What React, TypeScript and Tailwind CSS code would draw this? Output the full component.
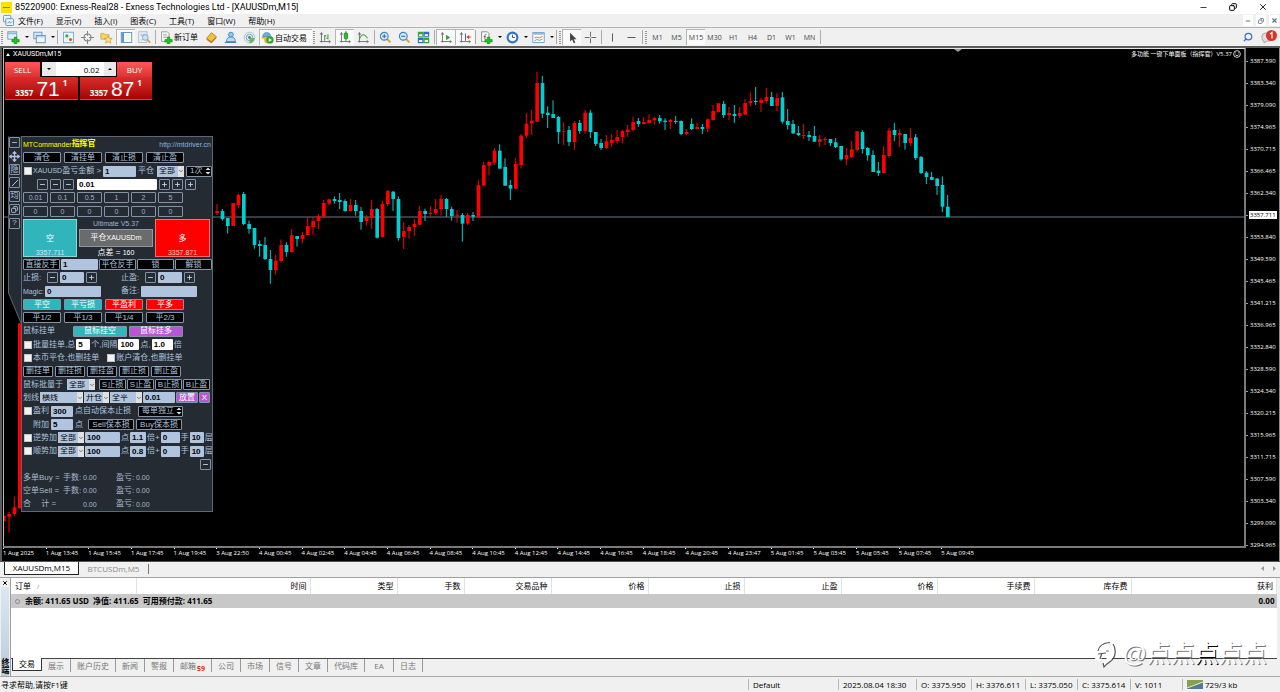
import type { ReactNode } from "react";
import { ChevronDown, Copy, Minus, Move, Plus, Search, X } from "lucide-react";

type Bar = ["r" | "c", number, number, number, number];

// colour, body top, body bottom, wick top, wick bottom
const segments: { from: number; base: number; bars: Bar[] }[] = [
  {
    from: -40,
    base: 990,
    bars: [
      ["r", 378, 393, 375, 435],
      ["r", 372, 380, 365, 428],
      ["r", 352, 372, 320, 380],
      ["r", -200, 355, -200, 355],
    ],
  },
  {
    from: 0,
    base: 330,
    bars: [
      ["r", 123, 129, 102, 135], ["c", 123, 147, 117, 152], ["c", 144, 168, 144, 191], ["r", 99, 168, 99, 168],
      ["r", 75, 105, 71, 116], ["c", 72, 162, 66, 166], ["c", 162, 177, 152, 191], ["c", 174, 225, 174, 236],
      ["c", 222, 228, 211, 260], ["c", 225, 267, 201, 270], ["c", 267, 300, 240, 341], ["r", 272, 300, 254, 314],
      ["r", 225, 273, 208, 278], ["c", 225, 246, 217, 260], ["r", 196, 246, 178, 248], ["c", 198, 207, 198, 230],
      ["r", 195, 207, 186, 221], ["r", 168, 195, 141, 195], ["r", 153, 171, 141, 194], ["r", 138, 153, 132, 177],
      ["r", 99, 140, 90, 140], ["r", 88, 101, 86, 105], ["c", 87, 93, 79, 101], ["c", 90, 96, 69, 117],
      ["c", 93, 123, 88, 125], ["r", 105, 123, 87, 124], ["c", 105, 123, 90, 137], ["c", 123, 156, 111, 179],
      ["r", 141, 153, 135, 167], ["r", 117, 144, 90, 176], ["c", 117, 203, 114, 206], ["r", 102, 201, 92, 203],
      ["r", 63, 102, 60, 107], ["c", 65, 87, 63, 123], ["c", 87, 204, 79, 212], ["r", 183, 201, 156, 237],
      ["r", 171, 183, 165, 206], ["r", 162, 171, 147, 198], ["r", 123, 164, 108, 166], ["c", 123, 132, 116, 153],
      ["r", 129, 132, 108, 140], ["r", 117, 129, 87, 135], ["r", 87, 117, 75, 137], ["c", 87, 117, 84, 141],
      ["c", 117, 138, 110, 152], ["r", 134, 137, 120, 158], ["c", 135, 161, 129, 215], ["r", 135, 161, 129, 165],
      ["c", 135, 140, 126, 153], ["r", 45, 141, 31, 141],
    ],
  },
  {
    from: 50,
    base: 0,
    bars: [
      ["r", 315, 377, 306, 377], ["r", 306, 317, 302, 346], ["r", 272, 308, 264, 315], ["c", 272, 326, 253, 326],
      ["c", 321, 377, 295, 378], ["c", 375, 386, 360, 420], ["r", 312, 386, 294, 388], ["r", 227, 315, 222, 326],
      ["r", 191, 227, 159, 234], ["r", 182, 190, 150, 225], ["r", 69, 185, 36, 186], ["c", 69, 161, 48, 174],
      ["c", 158, 165, 139, 204], ["c", 162, 174, 121, 174], ["c", 171, 216, 168, 251], ["r", 213, 215, 187, 255],
      ["c", 210, 246, 198, 258], ["r", 189, 246, 183, 270], ["c", 189, 213, 180, 221], ["r", 158, 213, 150, 221],
      ["c", 158, 216, 150, 234], ["c", 216, 252, 216, 258], ["c", 249, 264, 237, 270], ["r", 244, 264, 225, 267],
      ["r", 240, 249, 223, 261], ["r", 231, 243, 210, 251], ["r", 213, 231, 210, 250], ["r", 209, 216, 195, 230],
      ["r", 186, 210, 170, 215], ["c", 183, 192, 174, 201], ["r", 186, 192, 171, 194], ["r", 180, 189, 163, 191],
      ["r", 174, 181, 170, 194], ["c", 174, 184, 165, 191], ["c", 182, 186, 175, 210], ["r", 180, 186, 177, 207],
      ["c", 183, 186, 168, 192], ["c", 183, 222, 181, 226], ["r", 216, 222, 207, 226], ["c", 192, 207, 175, 210],
      ["r", 201, 207, 188, 208], ["c", 201, 207, 192, 222], ["r", 178, 206, 176, 216], ["r", 153, 180, 135, 182],
      ["r", 130, 156, 129, 158], ["c", 132, 165, 123, 174],
    ],
  },
  {
    from: 96,
    base: 30,
    bars: [
      ["r", 129, 135, 111, 150], ["c", 132, 138, 105, 159], ["r", 129, 138, 111, 144], ["r", 99, 134, 87, 135],
      ["r", 93, 99, 67, 108], ["c", 93, 96, 51, 105], ["r", 90, 99, 84, 126], ["r", 81, 93, 54, 101],
      ["c", 81, 108, 66, 108], ["r", 84, 108, 70, 123], ["c", 82, 155, 66, 161], ["c", 153, 165, 117, 179],
      ["c", 162, 190, 150, 192], ["c", 189, 195, 168, 198], ["r", 195, 198, 162, 207], ["c", 195, 201, 183, 213],
      ["c", 198, 215, 168, 216], ["r", 207, 216, 195, 231], ["r", 207, 210, 201, 225], ["c", 207, 219, 207, 228],
      ["c", 217, 231, 204, 234], ["c", 228, 268, 228, 272], ["r", 255, 267, 234, 285], ["r", 238, 261, 213, 264],
      ["r", 184, 240, 183, 245], ["c", 186, 237, 180, 251], ["c", 234, 256, 231, 272], ["c", 255, 306, 241, 306],
      ["c", 302, 309, 276, 318], ["r", 255, 309, 228, 311], ["r", 182, 258, 174, 264], ["c", 180, 195, 159, 213],
      ["r", 189, 195, 178, 231], ["c", 192, 219, 192, 239], ["r", 204, 219, 174, 228], ["c", 202, 264, 192, 270],
      ["c", 261, 309, 258, 312], ["c", 308, 321, 303, 342], ["c", 321, 330, 306, 330], ["c", 326, 348, 324, 375],
      ["c", 345, 410, 319, 426], ["c", 410, 441, 375, 441],
    ],
  },
];

const candles = segments.flatMap((s) =>
  s.bars.map(([c, top, bottom, high, low], i) => ({
    x: 16 * (s.from + i) - 759,
    fill: c === "r" ? "#ff0000" : "#00ced1",
    top: top + s.base,
    bottom: bottom + s.base,
    high: high + s.base,
    low: low + s.base,
  }))
);

const prices = [
  "3387.590", "3383.340", "3379.090", "3374.965", "3370.715", "3366.465", "3362.340", "3357.711",
  "3353.840", "3349.590", "3345.465", "3341.215", "3336.965", "3332.840", "3328.590", "3324.340",
  "3320.215", "3315.965", "3311.715", "3307.590", "3303.340", "3299.090", "3294.965",
];

const times = [
  "1 Aug 2025", "1 Aug 13:45", "1 Aug 15:45", "1 Aug 17:45", "1 Aug 19:45", "3 Aug 22:50",
  "4 Aug 00:45", "4 Aug 02:45", "4 Aug 04:45", "4 Aug 06:45", "4 Aug 08:45", "4 Aug 10:45",
  "4 Aug 12:45", "4 Aug 14:45", "4 Aug 16:45", "4 Aug 18:45", "4 Aug 20:45", "4 Aug 23:47",
  "5 Aug 01:45", "5 Aug 03:45", "5 Aug 05:45", "5 Aug 07:45", "5 Aug 09:45",
];

const menus = ["文件(F)", "显示(V)", "插入(I)", "图表(C)", "工具(T)", "窗口(W)", "帮助(H)"];
const timeframes = ["M1", "M5", "M15", "M30", "H1", "H4", "D1", "W1", "MN"];

const columns = [
  { name: "时间", width: "w-[174px]" },
  { name: "类型", width: "w-[87px]" },
  { name: "手数", width: "w-[67px]" },
  { name: "交易品种", width: "w-[87px]" },
  { name: "价格", width: "w-[97px]" },
  { name: "止损", width: "w-[96px]" },
  { name: "止盈", width: "w-[97px]" },
  { name: "价格", width: "w-[96px]" },
  { name: "手续费", width: "w-[97px]" },
  { name: "库存费", width: "w-[97px]" },
  { name: "获利", width: "" },
];

const terminalTabs = ["展示", "账户历史", "新闻", "警报", "邮箱", "公司", "市场", "信号", "文章", "代码库", "EA", "日志"];

/* ---------- toolbar ---------- */

function Icon({ children }: { children: ReactNode }) {
  return (
    <svg viewBox="0 0 16 16" className="size-[13px] shrink-0" fill="none" aria-hidden="true">
      {children}
    </svg>
  );
}

const plusMark = <path d="M9 7.500h3v3h3v3h-3v2.500H9V13.500H6v-3h3z" fill="#1fc21f" stroke="#0b8a0b" strokeWidth=".7" />;
const axes = <path d="M3 2v12M1 13h13M1.500 4.500 3 2l1.500 2.500M12 11.500l2 1.500-2 1.500" stroke="#666" strokeWidth="1.100" />;

function Tool({ label, active, children }: { label: string; active?: boolean; children: ReactNode }) {
  return (
    <button
      aria-label={label}
      className={`flex h-[16px] w-[19px] shrink-0 items-center justify-center ${
        active ? "border-l border-t border-[#b5b5b5] bg-[#f9f9f9]" : ""
      }`}
    >
      {children}
    </button>
  );
}

function Caret() {
  return (
    <button aria-label="更多" className="flex w-[7px] shrink-0 items-center justify-center">
      <svg viewBox="0 0 4 2" className="h-[2px] w-[4px]"><path d="M0 0h4L2 2z" fill="#000" /></svg>
    </button>
  );
}

const Sep = () => <span className="mx-px h-[14px] w-px shrink-0 bg-[#aaa]" />;
const Grip = () => <span className="mx-px h-[13px] w-[2px] shrink-0 border-x border-dotted border-[#999]" />;

function Magnifier({ sign }: { sign: string }) {
  return (
    <Icon>
      <path d="M9.500 9.500 14 14" stroke="#d6a431" strokeWidth="2.500" />
      <circle cx="6.500" cy="6.500" r="4.800" fill="#d4ebfa" stroke="#4187c4" strokeWidth="1.400" />
      <path d={sign} stroke="#2a70b0" strokeWidth="1.400" />
    </Icon>
  );
}

function Toolbar() {
  return (
    <div className="flex h-[19px] items-center border-t border-[#b4b4b4] bg-[#f0f0f0] text-[8px]">
      <Grip />
      <Tool label="新图表">
        <Icon><rect x="1" y="1" width="11" height="9" fill="#e6f2fb" stroke="#5b92c4" /><path d="M1 3h11" stroke="#8bb6da" strokeWidth="2" />{plusMark}</Icon>
      </Tool>
      <Caret />
      <Tool label="配置文件">
        <Icon><rect x="1" y="1.500" width="10" height="8" fill="#d7e8f6" stroke="#5b92c4" /><rect x="4" y="5.500" width="11" height="9" fill="#f1f8fd" stroke="#4781b8" /><path d="M4.500 7h10" stroke="#b3d0e8" strokeWidth="2" /></Icon>
      </Tool>
      <Caret />
      <Sep />
      <Tool label="市场报价">
        <Icon><rect x="2" y="1.500" width="12" height="13" fill="#f5fbff" stroke="#5d9cc9" /><circle cx="6" cy="6" r="2" fill="#2fae38" /><circle cx="10.500" cy="10.500" r="2" fill="#e05b2b" /><path d="M4 13l8-10" stroke="#bcd8ea" strokeWidth=".8" /></Icon>
      </Tool>
      <Tool label="数据窗口">
        <Icon><circle cx="8" cy="8" r="4.300" stroke="#808080" strokeWidth="1.300" /><path d="M8 0v6M8 10v6M0 8h6M10 8h6" stroke="#808080" strokeWidth="1.200" /></Icon>
      </Tool>
      <Tool label="导航">
        <Icon><path d="M1 3h4l1 1.500h5V10H1z" fill="#f5d469" stroke="#c99a2a" strokeWidth=".8" /><path d="m10 6 1.500 3 3.500.300-2.600 2.200.900 3.500L10 13.200 6.900 15l.8-3.500L5 9.300 8.500 9z" fill="#ffe27a" stroke="#c98e1c" strokeWidth=".8" /></Icon>
      </Tool>
      <Tool label="终端" active>
        <Icon><rect x="1.500" y="2" width="13" height="12" fill="#fff" stroke="#3f7fba" /><path d="M2 2.500h3v11H2z" fill="#5a96cc" /><path d="M7 5h6M7 7.500h6M7 10h6" stroke="#cfe0ee" strokeWidth=".8" /></Icon>
      </Tool>
      <Tool label="策略测试">
        <Icon><rect x="1" y="1" width="10" height="13" fill="#f1f6fa" stroke="#9ab0c2" /><path d="M3 4h6M3 6h3M3 11h3" stroke="#9ab0c2" /><circle cx="9" cy="8" r="3.500" fill="#cbe3f5" stroke="#6c9bc0" /><path d="m11.500 10.500 3.500 4" stroke="#cfa030" strokeWidth="2" /></Icon>
      </Tool>
      <Sep />
      <button className="flex h-[16px] w-[45px] shrink-0 items-center gap-px pl-[3px] whitespace-nowrap">
        <Icon><path d="M2 1h7l2 2v10H2z" fill="#fff" stroke="#888" /><path d="M4 4h4M4 6h5M4 8h4" stroke="#888" strokeWidth=".8" />{plusMark}</Icon>
        <span>新订单</span>
      </button>
      <Tool label="MetaEditor">
        <Icon><path d="M2 9 8 2l6 5-6 7z" fill="#f3bf3d" stroke="#ad7c17" /><path d="m2 9 6 3.500L14 7v2l-6 6-6-4z" fill="#b98218" /></Icon>
      </Tool>
      <Tool label="MQL5社区">
        <Icon><circle cx="8.500" cy="4.500" r="3" fill="#8dc5ef" stroke="#3b82bd" /><path d="M3 13c0-4 2-5.500 5.500-5.500S14 9 14 13z" fill="#b8dcf6" stroke="#3b82bd" /><path d="M1 14h14" stroke="#3b82bd" strokeWidth="1.500" /></Icon>
      </Tool>
      <Tool label="信号">
        <Icon><circle cx="8" cy="8" r="6.500" stroke="#9ab8cc" /><circle cx="8" cy="8" r="4" stroke="#6f9fbc" strokeWidth="1.200" /><circle cx="8" cy="8" r="1.700" fill="#3778a8" /><path d="M8 8v7.500c4-.5 6-3 6.500-6.500z" fill="#64b964" /></Icon>
      </Tool>
      <button className="flex h-[16px] w-[53px] shrink-0 items-center gap-px border-l border-t border-[#b5b5b5] bg-[#f9f9f9] pl-px whitespace-nowrap">
        <Icon><ellipse cx="7" cy="8" rx="6.500" ry="2" fill="#e9bd3a" /><path d="M2 7c0-7 10-7 10 0z" fill="#69aedd" stroke="#3b7eb1" strokeWidth=".7" /><path d="M3 9h8l-2 6H5z" fill="#e9bd3a" /><circle cx="11" cy="11" r="4.500" fill="#27a52c" /><path d="m9.500 8.500 4 2.500-4 2.500z" fill="#fff" /></Icon>
        <span>自动交易</span>
      </button>
      <Grip />
      <Tool label="柱状图"><Icon>{axes}<path d="M7 5v7M7 6h2M11 4v6M9 9h2" stroke="#42a047" strokeWidth="1.300" /></Icon></Tool>
      <Tool label="阴阳烛" active><Icon>{axes}<path d="M8.500 0v13" stroke="#168a1b" /><rect x="6.500" y="2.500" width="4" height="7" rx="1" fill="#25c22c" stroke="#168a1b" /></Icon></Tool>
      <Tool label="折线图"><Icon>{axes}<path d="M3 10c3-7 6-7 10-1" stroke="#42a047" strokeWidth="1.300" /></Icon></Tool>
      <Sep />
      <Tool label="放大"><Magnifier sign="M4 6.500h5M6.500 4v5" /></Tool>
      <Tool label="缩小"><Magnifier sign="M4 6.500h5" /></Tool>
      <Tool label="平铺窗口">
        <Icon><path d="M1 1h7v6H1zM8 8h7v7H8z" fill="#35a83a" /><path d="M8 1h7v6H8zM1 8h7v7H1z" fill="#2e6fc2" /><path d="M2.500 4h4v2h-4zM9.500 4h4v2h-4zM2.500 11h4v2.500h-4zM9.500 11h4v2.500h-4z" fill="#f2f8f2" /></Icon>
      </Tool>
      <Sep />
      <Tool label="自动滚动" active><Icon>{axes}<path d="m7.500 4.500 5 3.500-5 3.500z" fill="#24a52b" /></Icon></Tool>
      <Tool label="图表平移" active><Icon>{axes}<path d="M8 3v9" stroke="#3c6ea5" strokeWidth="1.300" /><path d="m9 7.500 3.500-2.500v5z" fill="#c9402a" /><path d="M12 7.500h3" stroke="#c9402a" /></Icon></Tool>
      <Sep />
      <Tool label="指标"><Icon><path d="M2 1h7l2 2v10H2z" fill="#fff" stroke="#777" /><path d="M6 10V6c0-2 1-2 2-2M4.500 7h3" stroke="#555" />{plusMark}</Icon></Tool>
      <Caret />
      <Tool label="周期"><Icon><circle cx="8" cy="8" r="6" fill="#fff" stroke="#2b78c5" strokeWidth="2.600" /><path d="M8 4.500V8h3" stroke="#555" strokeWidth="1.200" /></Icon></Tool>
      <Caret />
      <Tool label="模板"><Icon><rect x="1" y="2" width="14" height="12" fill="#fff" stroke="#5b92c4" /><path d="M1.500 3.500h13" stroke="#8bb6da" strokeWidth="2" /><path d="m3 8.500 3-1 3 1 4-2" stroke="#c0584a" /><path d="m3 12 3-1.500 3 1 4-1.500" stroke="#42a047" /></Icon></Tool>
      <Caret />
      <Sep />
      <Grip />
      <Tool label="光标" active><Icon><path d="M5 2v11l2.500-2.500L9.500 15l2-1-2-4H13z" fill="#444" /></Icon></Tool>
      <Tool label="十字光标"><Icon><path d="M8 1v6M8 9v6M1 8h6M9 8h6" stroke="#666" strokeWidth="1.200" /></Icon></Tool>
      <Sep />
      <Tool label="垂直线"><Icon><path d="M8 3v10" stroke="#555" strokeWidth="1.200" /></Icon></Tool>
      <Tool label="水平线"><Icon><path d="M3 8h10" stroke="#555" strokeWidth="1.200" /></Icon></Tool>
      <Sep />
      <Grip />
      {timeframes.map((t) => (
        <button
          key={t}
          className={`flex h-[16px] w-[19px] shrink-0 items-center justify-center text-[7px] text-[#444] ${
            t === "M15" ? "border-l border-t border-[#b5b5b5] bg-[#f9f9f9]" : ""
          }`}
        >
          {t}
        </button>
      ))}
      <Sep />
      <button aria-label="搜索" className="mr-[8px] ml-auto">
        <Search className="size-[10px] -scale-x-100 text-[#3c6fd1]" strokeWidth={3} />
      </button>
      <button aria-label="通知" className="mr-[3px]">
        <svg viewBox="0 0 16 14" className="h-[14px] w-[16px]">
          <path d="M1 6q0-3 4-3h4v8H6l-3 2v-2q-2 0-2-3z" fill="#ddd" stroke="#aaa" />
          <circle cx="10.500" cy="5.500" r="5.500" fill="#dd3322" />
          <path d="M9 4l2-1.500v6" fill="none" stroke="#fff" strokeWidth="1.200" />
        </svg>
      </button>
    </div>
  );
}

/* ---------- one click trading ---------- */

function OneClick() {
  return (
    <div className="mt-[3px] ml-px w-[147px] text-white">
      <div className="flex h-[15px] justify-between">
        <button className="w-[35px] bg-linear-to-b from-[#ff5757] to-[#de3232] text-[8px]">SELL</button>
        <div className="flex h-[14px] w-[74px] bg-white text-black">
          <button aria-label="减少" className="flex w-[14px] items-center justify-center bg-[#e9e9e9]">
            <svg viewBox="0 0 4 2" className="h-[2px] w-[4px]"><path d="M0 0h4L2 2z" /></svg>
          </button>
          <input aria-label="手数" defaultValue="0.02" className="w-[48px] bg-white pr-[4px] text-right text-[8px]" />
          <button aria-label="增加" className="flex w-[12px] items-center justify-center bg-[#e9e9e9]">
            <svg viewBox="0 0 4 2" className="h-[2px] w-[4px]"><path d="M0 2h4L2 0z" /></svg>
          </button>
        </div>
        <button className="w-[35px] bg-linear-to-b from-[#ff5757] to-[#de3232] text-[8px]">BUY</button>
      </div>
      <div className="flex h-[23px] gap-[2px]">
        {["71", "87"].map((pips) => (
          <button
            key={pips}
            className="flex flex-1 items-end justify-center gap-[3px] border-b border-[#e03a3a] bg-linear-to-b from-[#d92c2c] to-[#a80000] leading-none"
          >
            <span className="pb-[2px] text-[8px] font-bold">3357</span>
            <span className="font-['Liberation_Sans',sans-serif] text-[21px] leading-[21px]">{pips}</span>
            <span className="self-start pt-[2px] text-[8px] font-bold">1</span>
          </button>
        ))}
      </div>
    </div>
  );
}

/* ---------- MTCommander panel ---------- */

function Btn({ className = "bg-black text-[#b0c4de]", children, label }: { className?: string; children: ReactNode; label?: string }) {
  return (
    <button
      aria-label={label}
      className={`flex h-[11px] shrink-0 items-center justify-center rounded-[1px] border border-[#8494a8] leading-none whitespace-nowrap ${className}`}
    >
      {children}
    </button>
  );
}

function Field({ label, value, className = "bg-[#b0c4de]" }: { label: string; value: string; className?: string }) {
  return (
    <input
      aria-label={label}
      defaultValue={value}
      className={`h-[11px] min-w-0 shrink-0 rounded-[1px] px-[2px] text-[8px] leading-none font-bold text-black ${className}`}
    />
  );
}

function Pick({ value, label, className }: { value: string; label: string; className: string }) {
  return (
    <span className={`grid h-[11px] shrink-0 ${className}`}>
      <select aria-label={label} className="col-start-1 row-start-1 w-full appearance-none bg-[#b0c4de] pl-[2px] text-black">
        <option>{value}</option>
      </select>
      <span className="pointer-events-none col-start-1 row-start-1 flex w-[6px] items-center justify-self-end bg-[#e0e0e0]">
        <ChevronDown className="size-[6px] text-[#555]" strokeWidth={3} />
      </span>
    </span>
  );
}

function Spin({ value, label, className }: { value: string; label: string; className: string }) {
  return (
    <span className={`grid h-[11px] shrink-0 rounded-[1px] border border-[#8494a8] bg-black ${className}`}>
      <select aria-label={label} className="col-start-1 row-start-1 w-full appearance-none bg-black pl-[3px] text-[#b0c4de]">
        <option>{value}</option>
      </select>
      <svg viewBox="0 0 6 8" className="pointer-events-none col-start-1 row-start-1 h-[8px] w-[6px] self-center justify-self-end">
        <path d="M.500 3 3 .500 5.500 3zM.500 5 3 7.500 5.500 5z" fill="#d6e0ea" />
      </svg>
    </span>
  );
}

function Check({ children }: { children?: ReactNode }) {
  return (
    <label className="flex shrink-0 items-center gap-px whitespace-nowrap">
      <input type="checkbox" className="ml-px size-[8px] appearance-none border border-[#c4c4c4] bg-[#f2f2f2]" />
      {children}
    </label>
  );
}

const Row = ({ className = "gap-px", children }: { className?: string; children: ReactNode }) => (
  <div className={`flex items-center whitespace-nowrap ${className}`}>{children}</div>
);

const cyan = "bg-[#30b5bc] text-white";
const red = "bg-[#ff0000] text-white";
const purple = "bg-[#ba55d3] text-white";
const step = "w-[11px] text-[#c6d3e4]";

function Stepper({ label }: { label: string }) {
  return (
    <div className="flex items-center gap-[2px]">
      <span className="w-[22px]">{label}:</span>
      <Btn className={step} label={label + "减"}><Minus className="size-[7px]" strokeWidth={3} /></Btn>
      <Field label={label} value="0" className="w-[24px] bg-[#b0c4de]" />
      <Btn className={step} label={label + "加"}><Plus className="size-[7px]" strokeWidth={3} /></Btn>
    </div>
  );
}

function SideStrip() {
  const box = "flex size-[11px] items-center justify-center rounded-[1px] border border-[#8494a8] leading-none";
  return (
    <div className="relative h-[188px] w-[13px] shrink-0 text-[8px] text-[#b0c4de]">
      <svg viewBox="0 0 13 188" className="absolute inset-0 h-[188px] w-[13px]">
        <path d="M.5.5H13V187L.500 157z" fill="#242b33" />
        <path d="M.5.5V157L13 187" fill="none" stroke="#5b6876" />
      </svg>
      <div className="relative grid h-[94px] grid-rows-7 items-center justify-items-center">
        <button aria-label="折叠" className={box}><Minus className="size-[7px]" strokeWidth={3} /></button>
        <button aria-label="移动"><Move className="size-[11px]" strokeWidth={3} /></button>
        <button className={box}>隐</button>
        <button aria-label="画线" className={box}>
          <svg viewBox="0 0 8 8" className="size-[8px]"><path d="m1 7 6-6" stroke="currentColor" /></svg>
        </button>
        <button className={box}>均</button>
        <button aria-label="窗口" className={box}><Copy className="size-[7px] -scale-x-100" strokeWidth={3} /></button>
        <button className={box}>?</button>
      </div>
    </div>
  );
}

function TrendRow({ name, factor }: { name: string; factor: string }) {
  return (
    <Row>
      <Check>{name}</Check>
      <Pick label={name + "范围"} value="全部" className="w-[26px]" />
      <Field label={name + "点数"} value="100" className="w-[35px] bg-[#b0c4de]" />
      点
      <Field label={name + "倍数"} value={factor} className="w-[16px] bg-[#b0c4de]" />
      倍+
      <Field label={name + "手数"} value="0" className="w-[19px] bg-[#b0c4de]" />
      手
      <Field label={name + "层数"} value="10" className="w-[14px] bg-[#b0c4de]" />
      层
    </Row>
  );
}

function Commander() {
  return (
    <div className="mt-[36px] ml-[4px] flex font-['Liberation_Sans','Noto_Sans_CJK_SC',sans-serif]">
      <SideStrip />
      <div className="w-[192px] border border-[#5b6876] bg-[#242b33] pl-px text-[8px] leading-none text-[#b0c4de]">
        <div className="flex h-[14px] items-center pr-px whitespace-nowrap">
          <span className="text-[7px] text-[#ffff00]">MTCommander</span>
          <span className="font-bold text-[#ffff00]">指挥官</span>
          <a href="http://mtdriver.cn" className="ml-auto text-[7px] text-[#87b5e0]">http://mtdriver.cn</a>
        </div>

        <div className="grid h-[67px] grid-rows-5">
          <Row className="gap-[3px]">
            {["清仓", "清挂单", "清止损", "清止盈"].map((t) => (
              <Btn key={t} className="w-[38px] bg-black text-[#b0c4de]">{t}</Btn>
            ))}
          </Row>
          <Row className="gap-[2px]">
            <Check><span className="w-[68px]"><span className="text-[7px]">XAUUSD</span>盈亏金额 &gt;</span></Check>
            <Field label="金额" value="1" className="w-[33px] bg-[#b0c4de]" />
            <span className="w-[17px]">平仓</span>
            <Pick label="平仓范围" value="全部" className="w-[27px]" />
            <Spin label="次数" value="1次" className="w-[26px]" />
          </Row>
          <Row className="gap-[2px] pl-[14px]">
            {[1, 2, 3].map((n) => (
              <Btn key={n} className={step} label={"减" + n}><Minus className="size-[7px]" strokeWidth={3} /></Btn>
            ))}
            <Field label="手数" value="0.01" className="ml-px w-[80px] bg-white" />
            {[1, 2, 3].map((n) => (
              <Btn key={n} className={step} label={"加" + n}><Plus className="size-[7px]" strokeWidth={3} /></Btn>
            ))}
          </Row>
          <Row className="gap-[2px]">
            {["0.01", "0.1", "0.5", "1", "2", "5"].map((t) => (
              <Btn key={t} className="w-[25px] text-[7px] text-[#9db3cd]">{t}</Btn>
            ))}
          </Row>
          <Row className="gap-[2px]">
            {[1, 2, 3, 4, 5, 6].map((n) => (
              <Btn key={n} className="w-[25px] text-[7px] text-[#9db3cd]">0</Btn>
            ))}
          </Row>
        </div>

        <div className="mt-px flex h-[38px] gap-[2px]">
          <button className="flex w-[54px] flex-col items-center justify-end gap-[6px] border border-[#8fd8dc] bg-[#30b5bc] text-white">
            空<span className="text-[7px] text-[#cfe9ea]">3357.711</span>
          </button>
          <div className="flex w-[74px] flex-col items-center justify-between">
            <span className="pt-px text-[7px] text-[#9db3cd]">Ultimate V5.37</span>
            <button className="h-[18px] w-full border border-[#8b98a6] bg-[#6b6b6b] text-white">平仓<span className="text-[7px]">XAUUSDm</span></button>
            <span className="text-white">点差 = <span className="text-[7px]">160</span></span>
          </div>
          <button className="flex w-[55px] flex-col items-center justify-end gap-[6px] border border-[#ff6a6a] bg-[#ff0000] text-white">
            多<span className="text-[7px] text-[#ffd0d0]">3357.871</span>
          </button>
        </div>

        <div className="mt-px grid h-[200px] grid-rows-15">
          <Row>
            <Btn className="w-[37px] bg-black text-[#b0c4de]">直接反手</Btn>
            <Field label="反手倍数" value="1" className="w-[37px] bg-[#b0c4de]" />
            <Btn className="w-[37px] bg-black text-[#b0c4de]">平仓反手</Btn>
            <Btn className="w-[37px] bg-black text-[#b0c4de]">锁</Btn>
            <Btn className="w-[37px] bg-black text-[#b0c4de]">解锁</Btn>
          </Row>
          <Row className="gap-[24px]">
            <Stepper label="止损" />
            <Stepper label="止盈" />
          </Row>
          <Row className="gap-[20px]">
            <label className="flex items-center gap-[2px]">
              <span className="w-[20px] text-[7px]">Magic:</span>
              <Field label="Magic" value="0" className="w-[56px] bg-[#b0c4de]" />
            </label>
            <label className="flex items-center gap-[2px]">
              <span className="w-[18px]">备注:</span>
              <Field label="备注" value="" className="w-[56px] bg-[#b0c4de]" />
            </label>
          </Row>
          <Row className="gap-[3px]">
            <Btn className={`w-[38px] ${cyan}`}>平空</Btn>
            <Btn className={`w-[38px] ${cyan}`}>平亏损</Btn>
            <Btn className={`w-[38px] ${red}`}>平盈利</Btn>
            <Btn className={`w-[38px] ${red}`}>平多</Btn>
          </Row>
          <Row className="gap-[3px]">
            {["平1/2", "平1/3", "平1/4", "平2/3"].map((t) => (
              <Btn key={t} className="w-[38px] bg-black text-[#b0c4de]">{t}</Btn>
            ))}
          </Row>
          <Row className="gap-[2px]">
            <span className="w-[48px]">鼠标挂单</span>
            <Btn className={`w-[54px] ${cyan}`}>鼠标挂空</Btn>
            <Btn className={`w-[54px] ${purple}`}>鼠标挂多</Btn>
          </Row>
          <Row>
            <Check>批量挂单,总</Check>
            <Field label="挂单数量" value="5" className="w-[14px] bg-white" />
            个,间隔
            <Field label="间隔" value="100" className="w-[21px] bg-white" />
            点,
            <Field label="倍数" value="1.0" className="w-[21px] bg-white" />
            倍
          </Row>
          <Row className="gap-[7px]">
            <Check>本币平仓,也删挂单</Check>
            <Check>账户清仓,也删挂单</Check>
          </Row>
          <Row className="gap-[2px]">
            {["删挂单", "删挂损", "删挂盈", "删止损", "删止盈"].map((t) => (
              <Btn key={t} className="w-[30px] bg-black text-[#b0c4de]">{t}</Btn>
            ))}
          </Row>
          <Row>
            <span className="w-[43px]">鼠标批量于</span>
            <Pick label="批量范围" value="全部" className="mr-[3px] w-[28px]" />
            {["S止损", "S止盈", "B止损", "B止盈"].map((t) => (
              <Btn key={t} className="w-[27px] bg-black text-[#b0c4de]">{t}</Btn>
            ))}
          </Row>
          <Row>
            划线
            <Pick label="线型" value="横线" className="w-[43px]" />
            <Pick label="动作" value="开仓" className="w-[25px]" />
            <Pick label="平仓" value="全平" className="w-[32px]" />
            <Field label="划线手数" value="0.01" className="w-[32px] bg-[#b0c4de]" />
            <Btn className={`w-[22px] ${purple}`}>放置</Btn>
            <Btn className={`w-[11px] ${purple}`}>X</Btn>
          </Row>
          <Row className="gap-[2px]">
            <Check>盈利</Check>
            <Field label="盈利点数" value="300" className="w-[22px] bg-[#b0c4de]" />
            <span className="w-[61px]">点自动保本止损</span>
            <Spin label="保本方式" value="每单独立" className="w-[45px]" />
          </Row>
          <Row className="gap-[2px] pl-[10px]">
            附加
            <Field label="附加点数" value="5" className="w-[22px] bg-[#b0c4de]" />
            <span className="w-[11px]">点</span>
            <Btn className="w-[46px] bg-black text-[#b0c4de]">Sell保本损</Btn>
            <Btn className="w-[46px] bg-black text-[#b0c4de]">Buy保本损</Btn>
          </Row>
          <TrendRow name="逆势加" factor="1.1" />
          <TrendRow name="顺势加" factor="0.8" />
        </div>

        <div className="flex h-[13px] items-center justify-end pr-px">
          <Btn className={step} label="收起"><Minus className="size-[7px]" strokeWidth={3} /></Btn>
        </div>

        <table className="h-[40px] text-[#a9b9cc]">
          <tbody>
            {["多单Buy =", "空单Sell =", "合　 计 ="].map((name, i) => (
              <tr key={name}>
                <th className="w-[40px] p-0 text-left font-normal whitespace-nowrap">{name}</th>
                <td className="w-[20px] p-0">{i < 2 ? "手数:" : ""}</td>
                <td className="w-[33px] p-0 text-[7px]">0.00</td>
                <td className="w-[20px] p-0">盈亏:</td>
                <td className="p-0 text-[7px]">0.00</td>
              </tr>
            ))}
          </tbody>
        </table>
      </div>
    </div>
  );
}

/* ---------- chart ---------- */

function Chart() {
  return (
    <main className="flex flex-1 border-t-2 border-l-2 border-[#5c5c5c] bg-black text-white">
      <div className="ml-px flex min-w-0 flex-1 flex-col">
        <div className="relative flex-1 overflow-hidden border-t border-r-2 border-l border-t-[#e6e6e6] border-r-[#7a7a7a] border-l-[#b8b8b8]">
          <svg className="absolute inset-0 h-full w-full" aria-label="XAUUSDm M15">
            <rect x="0" y="167" width="100%" height="2" fill="#343b42" />
            <g transform="translate(466 11) scale(.33333)">
              {candles.map((c) => (
                <g key={c.x} fill={c.fill}>
                  <rect x={c.x - 1.5} y={c.high} width="3" height={c.low - c.high} />
                  <rect x={c.x - 5} y={c.top} width="11" height={c.bottom - c.top} />
                </g>
              ))}
            </g>
            <path d="M950 0h8l-4 3z" fill="#9a9a9a" />
          </svg>
          <div className="relative">
            <div className="flex h-[10px] items-center justify-between pr-[3px] pl-[2px] text-[6px] leading-none">
              <span className="flex items-center gap-[3px] text-[7px]">
                <svg viewBox="0 0 4 3" className="h-[3px] w-[4px]"><path d="M0 3h4L2 0z" fill="#fff" /></svg>
                <span className="font-['Roboto',sans-serif]">XAUUSDm,M15</span>
              </span>
              <span className="flex items-center gap-px">
                多功能 一键下单面板（指挥官）V5.37
                <svg viewBox="0 0 10 10" className="size-[8px]" fill="none" stroke="#fff">
                  <circle cx="5" cy="5" r="4.200" />
                  <path d="M3 6q2 2.500 4 0M3.300 3.200v1M6.700 3.200v1" />
                </svg>
              </span>
            </div>
            <OneClick />
            <Commander />
          </div>
        </div>
        <div className="h-[15px] border-t-2 border-[#7a7a7a]">
          <div className="grid w-[981px] grid-cols-[repeat(23,minmax(0,1fr))] text-[6px] leading-[8px]">
            {times.map((t) => (
              <span key={t} className="whitespace-nowrap before:block before:h-px before:w-px before:bg-white">{t}</span>
            ))}
          </div>
        </div>
      </div>
      <div className="flex w-[34px] shrink-0 flex-col border-r border-[#8a8a8a] pt-[2px] text-[6px]">
        {prices.map((p) => (
          <span key={p} className="flex h-[22px] items-center gap-px before:h-px before:w-[2px] before:bg-[#999]">
            <span className={p === "3357.711" ? "bg-white px-px leading-[8px] text-black" : "px-px leading-[8px]"}>{p}</span>
          </span>
        ))}
      </div>
    </main>
  );
}

/* ---------- terminal ---------- */

function Terminal() {
  return (
    <section className="flex h-[99px] border-t border-[#a0a0a0] bg-[#f0f0f0] text-[8px]">
      <div className="flex w-[10px] shrink-0 flex-col items-center justify-between">
        <button aria-label="关闭" className="flex h-[9px] items-center"><X className="size-[6px]" strokeWidth={4} /></button>
        <div className="flex w-[8px] flex-1 items-end justify-center bg-linear-to-b from-[#dbe7f3] to-[#bccbdb] pb-[2px]">
          <span className="text-[8px] leading-none font-bold [writing-mode:vertical-rl]">终端</span>
        </div>
      </div>
      <div className="flex min-w-0 flex-1 flex-col border-l border-[#a0a0a0] pr-[3px]">
        <div className="flex-1 bg-white">
          <table className="w-full table-fixed border-collapse whitespace-nowrap">
            <thead>
              <tr className="h-[16px]">
                <th className="w-[125px] border-r border-[#e2e2e2] p-0 pl-[4px] text-left font-normal">
                  订单 <span className="pl-[4px] text-[6px] text-[#888]">∕</span>
                </th>
                {columns.map((c, i) => (
                  <th key={i} className={`border-r border-[#e2e2e2] p-0 pr-[3px] text-right font-normal ${c.width}`}>{c.name}</th>
                ))}
              </tr>
            </thead>
            <tbody>
              <tr className="h-[14px] bg-[#c8c8c8] font-bold">
                <td colSpan={11} className="p-0 pl-[4px]">
                  <span className="mr-[5px] inline-block size-[5px] rounded-full border border-[#888]" />
                  余额: 411.65 USD&nbsp; 净值: 411.65&nbsp; 可用预付款: 411.65
                </td>
                <td className="p-0 pr-[2px] text-right">0.00</td>
              </tr>
            </tbody>
          </table>
        </div>
        <div className="flex h-[18px] border-t border-[#444] text-[#777]">
          <button className="mb-[4px] ml-px w-[30px] -translate-y-px border border-t-0 border-[#333] bg-white text-black">交易</button>
          {terminalTabs.map((t) => (
            <button key={t} className="flex h-[13px] min-w-[29px] items-center justify-center border-r border-[#999] px-[6px]">
              {t}
              {t === "邮箱" && <span className="self-end pl-px text-[7px] leading-[6px] font-bold text-[#e02828]">59</span>}
            </button>
          ))}
        </div>
      </div>
    </section>
  );
}

function StatusBar() {
  const cell = "flex h-[11px] items-center border-l border-[#b5b5b5] pl-[4px]";
  return (
    <footer className="flex h-[16px] items-center border-t border-[#a8a8a8] bg-[#f0f0f0] text-[8px] whitespace-nowrap">
      <span className="flex-1 pl-px">寻求帮助,请按F1键</span>
      <span className={`w-[90px] ${cell}`}>Default</span>
      <span className={`w-[78px] ${cell}`}>2025.08.04 18:30</span>
      <span className={`w-[55px] ${cell}`}>O: 3375.950</span>
      <span className={`w-[54px] ${cell}`}>H: 3376.611</span>
      <span className={`w-[52px] ${cell}`}>L: 3375.050</span>
      <span className={`w-[53px] ${cell}`}>C: 3375.614</span>
      <span className={`w-[52px] ${cell}`}>V: 1011</span>
      <span className={`w-[98px] gap-[2px] ${cell}`}>
        <svg viewBox="0 0 16 9" className="h-[9px] w-[16px]">
          <path d="M0 0h16v9H0z" fill="#4f7d94" />
          <path d="M0 0h16v2L0 8z" fill="#86a04e" />
          <path d="m0 8 16-6" stroke="#e8efe0" />
        </svg>
        729/3 kb
      </span>
    </footer>
  );
}

function Watermark() {
  return (
    <div className="pointer-events-none absolute right-[13px] bottom-[24px] flex items-center gap-[5px] font-['Liberation_Sans','Noto_Sans_CJK_SC',sans-serif] text-[24px] leading-none text-white [text-shadow:1px_1px_0_#777]">
      <svg viewBox="0 0 26 28" className="h-[28px] w-[26px]">
        <path d="M5 12C6 5 11 3 20 2c3 4 4 10 1 15-2 4-6 5-9 9l-1-5c4-2 5-4 5-7l-6 2-1 5-7-1 4-5z" fill="#fff" />
        <path d="M6 11C7 5 11 3 18 2.500M21 4c3 4 3 11 0 15-2 3-5 3-9 8l-1-4M6 14l8-1M10 13l-2 6" fill="none" stroke="#555" strokeWidth="1.200" />
        <path d="M14 11h3" stroke="#777" />
      </svg>
      <span>@点点<span className="[text-shadow:1px_1px_0_#000]">点</span>点点</span>
    </div>
  );
}

export default function App() {
  return (
    <div className="relative flex min-h-screen flex-col overflow-hidden bg-[#f0f0f0] font-['Open_Sans','Noto_Sans_CJK_SC',sans-serif] leading-none text-black">
      <header className="flex h-[14px] items-center bg-white">
        <svg viewBox="0 0 11 11" className="ml-px size-[11px]">
          <path d="M0 0h11v11H0z" fill="#ffdf00" />
          <path d="M2 5.500h7" stroke="#7a6a00" strokeWidth=".8" />
        </svg>
        <h1 className="ml-[3px] flex-1 font-['Roboto',sans-serif] text-[9px] whitespace-nowrap">85220900: Exness-Real28 - Exness Technologies Ltd - [XAUUSDm,M15]</h1>
        <button aria-label="最小化" className="flex w-[30px] justify-center"><Minus className="size-[9px]" /></button>
        <button aria-label="还原" className="flex w-[30px] justify-center"><Copy className="size-[8px] -scale-x-100" strokeWidth={3} /></button>
        <button aria-label="关闭" className="mr-[2px] flex w-[30px] justify-center"><X className="size-[10px]" /></button>
      </header>

      <nav className="flex h-[13px] items-center gap-[13px] bg-[#f0f0f0] pl-[3px] text-[8px] whitespace-nowrap">
        <svg viewBox="0 0 12 12" className="-mr-[9px] size-[11px]" fill="#eaf4fc" stroke="#5b92c4">
          <rect x=".5" y=".5" width="8" height="7" rx="1" />
          <rect x="3" y="4" width="8.500" height="7.500" rx="1" />
          <path d="m5 9 2-2 1 2 2-2" fill="none" />
        </svg>
        {menus.map((m) => (
          <button key={m}>{m}</button>
        ))}
        <div className="ml-auto flex gap-[3px] pr-px text-[#5d7283]">
          <button aria-label="最小化图表" className="flex h-[11px] w-[10px] items-center justify-center bg-white"><Minus className="size-[6px]" strokeWidth={4} /></button>
          <button aria-label="还原图表" className="flex h-[11px] w-[10px] items-center justify-center bg-white"><Copy className="size-[6px] -scale-x-100" strokeWidth={3} /></button>
          <button aria-label="关闭图表" className="flex h-[11px] w-[10px] items-center justify-center bg-white"><X className="size-[7px]" strokeWidth={4} /></button>
        </div>
      </nav>

      <Toolbar />
      <Chart />

      <div className="flex h-[16px] items-start border-t border-[#555] pl-[4px] text-[8px]">
        <button className="h-[13px] w-[75px] border border-t-0 border-[#222] bg-white">XAUUSDm,M15</button>
        <button className="my-[2px] h-[10px] w-[70px] border-r border-[#777] text-[#8a8a8a]">BTCUSDm,M5</button>
        <div className="mt-[4px] ml-auto flex gap-[9px] pr-[4px]">
          <button aria-label="向左"><svg viewBox="0 0 3 5" className="h-[5px] w-[3px]"><path d="M3 0v5L0 2.500z" fill="#999" /></svg></button>
          <button aria-label="向右"><svg viewBox="0 0 3 5" className="h-[5px] w-[3px]"><path d="M0 0v5l3-2.500z" fill="#999" /></svg></button>
        </div>
      </div>

      <Terminal />
      <StatusBar />
      <Watermark />
    </div>
  );
}
